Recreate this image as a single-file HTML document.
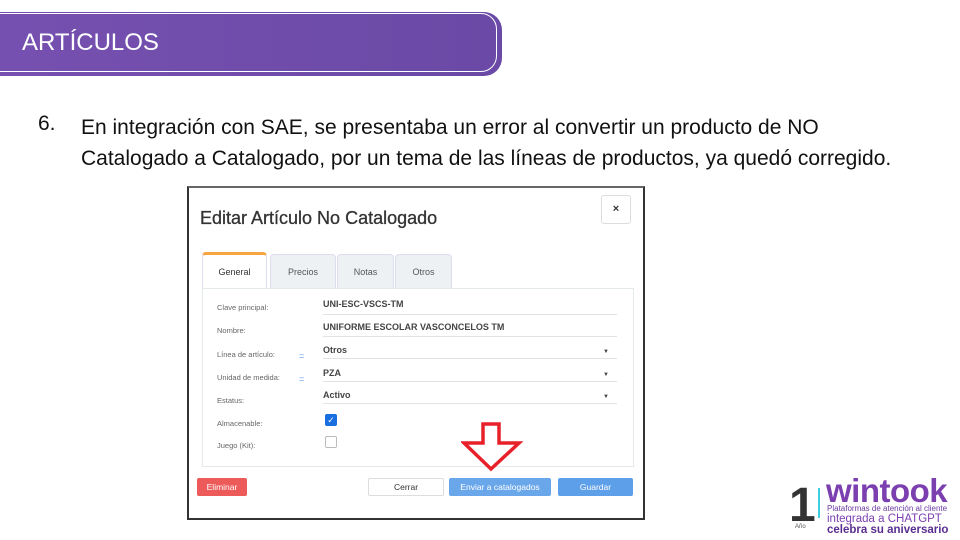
<!DOCTYPE html><html><head><meta charset="utf-8"><style>
body{margin:0;width:960px;height:540px;background:#fff;position:relative;overflow:hidden;font-family:"Liberation Sans",sans-serif}
.a{position:absolute}
.lbl{position:absolute;left:28px;font-size:7.5px;color:#666}
.val{position:absolute;left:134px;font-size:9px;font-weight:bold;color:#444}
.ln{position:absolute;left:134px;width:294px;height:1px;background:#e2e2e2}
.car{position:absolute;left:414px;font-size:6px;color:#444}
.tab{position:absolute;top:66px;height:34px;background:#eef1f3;border:1px solid #dde;border-bottom:none;border-radius:4px 4px 0 0;font-size:9px;color:#555;text-align:center;line-height:34px}
.btn{position:absolute;top:290px;height:18px;font-size:8.5px;line-height:18px;text-align:center;border-radius:2px}
</style></head><body>
<div class="a" style="left:0;top:12px;width:502px;height:64px;background:linear-gradient(90deg,#7650b0,#6a4aa6);border-radius:0 18px 18px 0"></div>
<div class="a" style="left:-4px;top:13px;width:499px;height:57px;border:1.5px solid #fff;border-radius:0 16px 16px 0"></div>
<div class="a" style="left:22px;top:29px;font-size:24px;color:#fff">ARTÍCULOS</div>
<div class="a" style="left:38px;top:112px;font-size:21px;color:#111">6.</div>
<div class="a" style="left:81px;top:112px;font-size:21px;color:#111;line-height:31px;width:870px;white-space:nowrap">En integración con SAE, se presentaba un error al convertir un producto de NO<br>Catalogado a Catalogado, por un tema de las líneas de productos, ya quedó corregido.</div>
<div class="a" style="left:187px;top:186px;width:454px;height:330px;border:2px solid #333;border-top-color:#666;background:#fff;overflow:hidden">
<div class="a" style="left:11px;top:20px;font-size:18px;color:#333;-webkit-text-stroke:0.3px #333">Editar Artículo No Catalogado</div>
<div class="a" style="left:412px;top:7px;width:28px;height:27px;border:1px solid #ddd;border-radius:3px;text-align:center;line-height:27px;font-size:11px;font-weight:bold;color:#333">×</div>
<div class="tab" style="left:13px;width:63px;background:#fff;border-top:3px solid #f7a542;top:64px;color:#333">General</div>
<div class="tab" style="left:81px;width:64px">Precios</div>
<div class="tab" style="left:148px;width:55px">Notas</div>
<div class="tab" style="left:206px;width:55px">Otros</div>
<div class="a" style="left:13px;top:100px;width:430px;height:177px;border:1px solid #e3e8ea"></div>
<div class="lbl" style="top:115px">Clave principal:</div><div class="val" style="top:111px">UNI-ESC-VSCS-TM</div><div class="ln" style="top:126px"></div>
<div class="lbl" style="top:138px">Nombre:</div><div class="val" style="top:134px">UNIFORME ESCOLAR VASCONCELOS TM</div><div class="ln" style="top:148px"></div>
<div class="lbl" style="top:162px">Línea de artículo:</div><div class="a" style="left:110px;top:163px;color:#6aa0e8;font-size:9px">=</div><div class="val" style="top:157px">Otros</div><div class="car" style="top:161px">▼</div><div class="ln" style="top:170px"></div>
<div class="lbl" style="top:185px">Unidad de medida:</div><div class="a" style="left:110px;top:186px;color:#6aa0e8;font-size:9px">=</div><div class="val" style="top:180px">PZA</div><div class="car" style="top:184px">▼</div><div class="ln" style="top:193px"></div>
<div class="lbl" style="top:208px">Estatus:</div><div class="val" style="top:202px">Activo</div><div class="car" style="top:206px">▼</div><div class="ln" style="top:215px"></div>
<div class="lbl" style="top:231px">Almacenable:</div><div class="a" style="left:136px;top:226px;width:12px;height:12px;background:#1a6fe0;border-radius:2px;color:#fff;font-size:9px;text-align:center;line-height:12px">✓</div>
<div class="lbl" style="top:253px">Juego (Kit):</div><div class="a" style="left:136px;top:248px;width:10px;height:10px;border:1px solid #bbb;border-radius:2px"></div>
<svg class="a" style="left:272px;top:233px" width="64" height="52"><path d="M22 3H38V22H58L30 48L3 22H22Z" fill="#fff" stroke="#e8202a" stroke-width="3.5"/></svg>
<div class="btn" style="left:8px;width:50px;background:#ec5a5a;color:#fff">Eliminar</div>
<div class="btn" style="left:179px;width:74px;border:1px solid #ddd;color:#333;height:16px;line-height:16px">Cerrar</div>
<div class="btn" style="left:260px;width:102px;background:#6aa7ea;color:#fff">Enviar a catalogados</div>
<div class="btn" style="left:369px;width:75px;background:#5e9fea;color:#fff">Guardar</div>
</div>
<div class="a" style="left:789px;top:482px;font-size:48px;font-weight:bold;color:#333;line-height:48px">1</div>
<div class="a" style="left:795px;top:524px;font-size:6px;color:#555">Año</div>
<div class="a" style="left:818px;top:488px;width:2px;height:30px;background:#3dd0e0"></div>
<div class="a" style="left:826px;top:474px;font-size:33px;font-weight:bold;color:#7b3fb0;line-height:34px;letter-spacing:-0.5px">wintook</div>
<div class="a" style="left:827px;top:503px;font-size:8px;color:#6a3aa0;line-height:11px;white-space:nowrap">Plataformas de atención al cliente<br><span style="font-size:11.5px;color:#7b3fb0">integrada a CHATGPT</span><br><span style="font-size:11.5px;color:#5a2e90;font-weight:bold">celebra su aniversario</span></div>
</body></html>
